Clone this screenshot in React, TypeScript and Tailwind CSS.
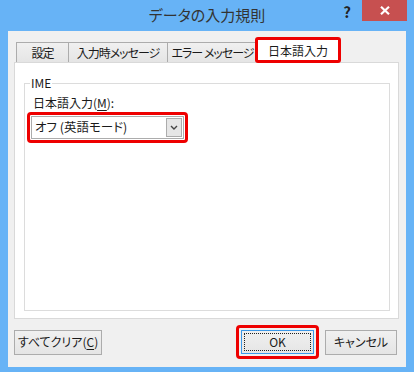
import React from "react";

const font = {
  fontFamily: '"Noto Sans CJK JP", "Noto Sans", sans-serif',
};

function Tab({ label, w }: { label: string; w: string }) {
  return (
    <div
      className={`${w} flex h-[20px] items-center justify-center whitespace-nowrap border border-b-0 border-[#acacac] bg-gradient-to-b from-[#f0f0f0] to-[#e5e5e5] text-[12px] leading-none tracking-[-1px] text-[#1a1a1a] -ml-px first:ml-0`}
    >
      {label}
    </div>
  );
}

function Chevron() {
  return (
    <svg width="8" height="5" viewBox="0 0 8 5" fill="none">
      <path d="M1 1 L4 4 L7 1" stroke="#444" strokeWidth="1.4" />
    </svg>
  );
}

function Button({
  children,
  className = "",
}: {
  children: React.ReactNode;
  className?: string;
}) {
  return (
    <div
      className={`flex h-[25px] items-center justify-center whitespace-nowrap border border-[#acacac] bg-gradient-to-b from-[#f0f0f0] to-[#e5e5e5] text-[12px] leading-none text-[#1a1a1a] ${className}`}
    >
      {children}
    </div>
  );
}

export default function App() {
  return (
    <div
      className="flex h-[372px] w-[414px] flex-col bg-[#67b3f6] [font-feature-settings:'palt']"
      style={font}
    >
      {/* title bar */}
      <div className="grid h-[31px] shrink-0 grid-cols-[1fr_auto_1fr]">
        <div />
        <div className="pt-[5px] text-[15px] leading-[20px] text-[#333]">
          データの入力規則
        </div>
        <div className="flex items-start justify-end pr-[7px]">
          <span className="mr-[11px] mt-[3px] text-[15px] font-bold leading-[18px] text-[#222]">
            ?
          </span>
          <div className="flex h-[21px] w-[45px] items-center justify-center bg-[#c75050]">
            <svg width="10" height="9" viewBox="0 0 10 9">
              <path
                d="M1 0.8 L9 8.2 M9 0.8 L1 8.2"
                stroke="#fff"
                strokeWidth="2.2"
              />
            </svg>
          </div>
        </div>
      </div>

      {/* body */}
      <div className="mx-2 mb-[5px] flex flex-1 flex-col bg-[#f0f0f0] pl-[6px] pr-[7px] pt-[6px]">
        {/* tabs */}
        <div className="flex h-[25px] items-end pl-[2px]">
          <Tab label="設定" w="w-[53px]" />
          <Tab label="入力時メッセージ" w="w-[100px]" />
          <Tab label="エラー メッセージ" w="w-[91px]" />
          <div className="relative z-10 -mb-px -ml-[3px] flex h-[26px] w-[86px] items-center justify-center whitespace-nowrap rounded-[3px] border-[3px] border-[#ee0000] bg-white pt-[1px] text-[12px] leading-none text-[#1a1a1a]">
            日本語入力
          </div>
        </div>

        {/* panel */}
        <div className="flex h-[257px] flex-col border border-[#d9d9d9] bg-white px-[9px] pr-[8px]">
          <fieldset className="mt-[12px] flex h-[236px] flex-col border border-[#dcdcdc] px-[2px]">
            <legend className="ml-[3px] px-[1px] text-[12px] leading-[16px] text-[#1a1a1a]">
              IME
            </legend>
            <div className="ml-[6px] mt-[4px] text-[12px] leading-[16px] text-[#1a1a1a]">
              日本語入力(<span className="underline underline-offset-2">M</span>):
            </div>
            <div className="mt-[1px] h-[31px] w-[161px] rounded-[4px] border-[3px] border-[#ee0000] p-[1px]">
              <div className="flex h-full border border-[#acacac] bg-white">
                <div className="flex flex-1 items-center whitespace-nowrap pl-[3px] text-[12.5px] leading-none text-[#1a1a1a]">
                  オフ (英語モード)
                </div>
                <div className="my-[1px] mr-[1px] flex w-[16px] items-center justify-center border border-[#acacac] bg-[#e6e6e6]">
                  <Chevron />
                </div>
              </div>
            </div>
          </fieldset>
        </div>

        {/* buttons */}
        <div className="mt-[6px] flex h-[34px] items-center">
          <Button className="w-[88px]">
            すべてクリア(<span className="underline underline-offset-2">C</span>)
          </Button>
          <div className="ml-auto h-[34px] w-[83px] rounded-[4px] border-[3px] border-[#ee0000] p-[2px]">
            <div className="flex h-full items-center justify-center border border-[#3c98e8] bg-gradient-to-b from-[#f0f0f0] to-[#e5e5e5] p-[2px]">
              <div className="flex h-full w-full items-center justify-center border border-dotted border-[#222] text-[12px] leading-none text-[#1a1a1a]">
                OK
              </div>
            </div>
          </div>
          <Button className="ml-[6px] mr-[2px] w-[72px]">キャンセル</Button>
        </div>
      </div>
    </div>
  );
}
